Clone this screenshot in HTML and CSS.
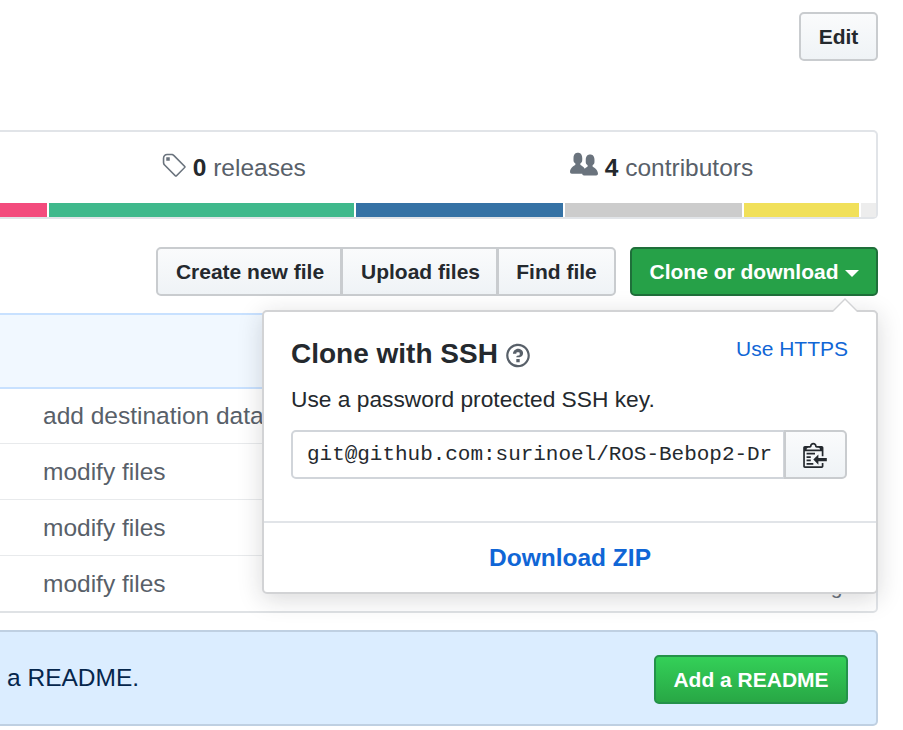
FILE: index.html
```html
<!DOCTYPE html>
<html lang="en">
<head>
<meta charset="utf-8">
<title>ROS-Bebop2-Drone</title>
<link rel="stylesheet" href="styles.css">
</head>
<body>
<div class="page">
  <div class="top-row"><button class="btn edit">Edit</button></div>

  <section class="summary">
    <div class="stats">
      <div class="stat stat-releases">
        <svg class="icon tag" viewBox="0 0 14 16"><path fill-rule="evenodd" d="M7.73 1.73C7.26 1.26 6.62 1 5.96 1H3.5C2.13 1 1 2.13 1 3.5v2.47c0 .66.27 1.3.73 1.77l6.06 6.06c.39.39 1.02.39 1.41 0l4.59-4.59a.996.996 0 000-1.41L7.73 1.73zM2.38 7.09c-.31-.3-.47-.7-.47-1.13V3.5c0-.88.72-1.59 1.59-1.59h2.47c.42 0 .83.16 1.13.47l6.14 6.13-4.73 4.73-6.13-6.15zM3.01 3h2v2H3V3h.01z"/></svg>
        <span><b>0</b> releases</span>
      </div>
      <div class="stat">
        <svg class="icon org" viewBox="0 0 16 16"><path fill-rule="evenodd" d="M16 12.999c0 .439-.45 1-1 1H7.995c-.539 0-.994-.447-.995-.999H1c-.54 0-1-.561-1-1 0-2.634 3-4 3-4s.229-.409 0-1c-.841-.621-1.058-.59-1-3 .058-2.419 1.367-3 2.5-3s2.442.58 2.5 3c.058 2.41-.159 2.379-1 3-.229.59 0 1 0 1s1.549.711 2.42 2.088C9.196 9.369 10 8.999 10 8.999s.229-.409 0-1c-.841-.62-1.058-.59-1-3 .058-2.419 1.367-3 2.5-3s2.437.581 2.495 3c.059 2.41-.158 2.38-1 3-.229.59 0 1 0 1s3.005 1.366 3.005 4z"/></svg>
        <span><b>4</b> contributors</span>
      </div>
    </div>
    <div class="lang-bar">
      <i class="lang pink" style="width:47px"></i>
      <i class="lang green" style="width:305px"></i>
      <i class="lang blue" style="width:207px"></i>
      <i class="lang grey" style="width:177px"></i>
      <i class="lang yellow" style="width:115px"></i>
      <i class="lang light" style="width:15px"></i>
    </div>
  </section>

  <div class="actions">
    <div class="btn-group">
      <button class="btn create">Create new file</button>
      <button class="btn upload">Upload files</button>
      <button class="btn find">Find file</button>
    </div>
    <button class="btn clone">Clone or download<span class="caret"></span></button>
  </div>

  <section class="files">
    <div class="commit-bar"></div>
    <div class="row row-first"><span>add destination data</span><span class="age">2 months ago</span></div>
    <div class="row"><span>modify files</span><span class="age">2 months ago</span></div>
    <div class="row"><span>modify files</span><span class="age">2 months ago</span></div>
    <div class="row row-last"><span>modify files</span><span class="age">2 months ago</span></div>
  </section>

  <section class="readme">
    <span>a README.</span>
    <button class="btn add">Add a README</button>
  </section>

  <aside class="popover">
    <div class="pop-main">
      <div class="pop-head">
        <h2>Clone with SSH <svg class="help" viewBox="0 0 14 16"><path fill-rule="evenodd" d="M6 10h2v2H6v-2zm4-3.5C10 8.64 8 9 8 9H6c0-.55.45-1 1-1h.5c.28 0 .5-.22.5-.5v-1c0-.28-.22-.5-.5-.5h-1c-.28 0-.5.22-.5.5V7H4c0-1.5 1.5-3 3-3s3 1 3 2.5zM7 2.3c3.14 0 5.7 2.56 5.7 5.7s-2.56 5.7-5.7 5.7A5.71 5.71 0 011.3 8c0-3.14 2.56-5.7 5.7-5.7zM7 1C3.14 1 0 4.14 0 8s3.14 7 7 7 7-3.14 7-7-3.14-7-7-7z"/></svg></h2>
        <a class="https" href="#">Use HTTPS</a>
      </div>
      <p class="pop-text">Use a password protected SSH key.</p>
      <div class="clone-field">
        <div class="url">git@github.com:surinoel/ROS-Bebop2-Dr</div>
        <button class="copy"><svg class="clippy" viewBox="0 0 14 16"><path fill-rule="evenodd" d="M2 13h4v1H2v-1zm5-6H2v1h5V7zm2 3V8l-3 3 3 3v-2h5v-2H9zM4.5 9H2v1h2.5V9zM2 12h2.5v-1H2v1zm9 1h1v2c-.02.28-.11.52-.3.7-.19.18-.42.28-.7.3H1c-.55 0-1-.45-1-1V4c0-.55.45-1 1-1h3c0-1.11.89-2 2-2 1.11 0 2 .89 2 2h3c.55 0 1 .45 1 1v5h-1V6H1v9h10v-2zM2 5h8c0-.55-.45-1-1-1H8c-.55 0-1-.45-1-1s-.45-1-1-1-1 .45-1 1-.45 1-1 1H3c-.55 0-1 .45-1 1z"/></svg></button>
      </div>
    </div>
    <a class="zip" href="#">Download ZIP</a>
  </aside>
</div>
</body>
</html>
```

FILE: styles.css
```css
* { box-sizing: border-box; }
html, body { margin: 0; padding: 0; background: #fff; }
body { font-family: "Liberation Sans", Arial, sans-serif; color: #24292e; }
.page { position: relative; width: 903px; height: 730px; overflow: hidden; padding: 12px 25px 0 0; }

.btn {
  display: block; height: 49px; padding: 0; font: bold 21px/1 "Liberation Sans", Arial, sans-serif;
  color: #24292e; border: 2px solid #c9cccf; border-radius: 5px;
  background: linear-gradient(#fafbfc, #eff3f6); white-space: nowrap;
}
.top-row { display: flex; justify-content: flex-end; }
.edit { width: 79px; }

.summary { margin-top: 69px; height: 89px; border: 2px solid #e1e4e8; border-left: 0; border-radius: 0 5px 5px 0; }
.stats { height: 71px; display: flex; justify-content: flex-end; }
.stat { width: 429px; display: flex; align-items: center; justify-content: center; gap: 7px; font-size: 24.5px; color: #586069; }
.stat-releases { margin-right: -1px; }
.stat b { color: #24292e; }
.icon { fill: #6a737d; display: block; }
.tag { width: 24.5px; height: 28px; margin-top: -4px; }
.org { width: 28px; height: 28px; margin-top: -5px; }
.lang-bar { display: flex; gap: 2px; height: 14px; }
.lang { display: block; height: 14px; }
.pink { background: #f34b7d; }
.green { background: #3fb98c; }
.blue { background: #3572a5; }
.grey { background: #ccc; }
.yellow { background: #f1e05a; }
.light { background: #ededed; }

.actions { margin-top: 28px; display: flex; justify-content: flex-end; gap: 14px; }
.btn-group { display: flex; }
.create { width: 186px; padding-left: 2px; border-radius: 5px 0 0 5px; }
.upload { width: 157px; padding-left: 2px; margin-left: -1px; border-radius: 0; }
.find { width: 119px; margin-left: -1px; border-radius: 0 5px 5px 0; }
.clone { width: 248px; color: #fff; background: #26a148; border-color: #1f6f3a; display: flex; align-items: center; justify-content: center; }
.caret { display: inline-block; margin-left: 6px; margin-top: 3px; border: 7px solid transparent; border-top-color: #fff; border-bottom: 0; }

.files { margin-top: 17px; height: 300px; border-right: 2px solid #e1e4e8; border-bottom: 2px solid #dfe2e5; border-radius: 0 0 5px 0; }
.commit-bar { height: 76px; background: #f1f8ff; border: 2px solid #c8e1ff; border-left: 0; }
.row { height: 56px; display: flex; justify-content: space-between; align-items: center; padding: 0 22px 0 43px; font-size: 24.5px; color: #586069; border-bottom: 1px solid #e8eaec; }
.row-first { height: 55px; }
.row-last { height: 55px; border-bottom: 0; }
.age { font-size: 21px; color: #6a737d; padding-top: 7px; }

.readme { margin-top: 17px; height: 96px; display: flex; align-items: center; justify-content: space-between; padding: 0 28px 0 7px; background: #dbedff; border: 2px solid #bfd0e2; border-left: 0; border-radius: 0 5px 5px 0; color: #05264c; font-size: 24.5px; }
.add { width: 194px; color: #fff; background: linear-gradient(#34d058, #28a745); border-color: #24924a; margin-top: 3px; }

.popover { position: absolute; left: 262px; top: 310px; width: 616px; height: 284px; background: #fff; border: 2px solid #d2d3d5; border-radius: 5px; box-shadow: 0 5px 24px rgba(27,31,35,.17); }
.popover::before { content: ""; position: absolute; right: 18px; top: -14px; border: 13px solid transparent; border-top: 0; border-bottom: 13px solid #d2d3d5; }
.popover::after { content: ""; position: absolute; right: 19px; top: -12px; border: 12px solid transparent; border-top: 0; border-bottom: 12px solid #fff; }
.pop-main { height: 211px; padding: 0 28px 0 27px; border-bottom: 2px solid #e1e4e8; }
.pop-head { display: flex; justify-content: space-between; height: 73px; }
.pop-head h2 { margin: 0; padding-top: 26px; font-size: 28px; line-height: 32px; font-weight: bold; color: #24292e; white-space: nowrap; }
.help { width: 24px; height: 27px; fill: #586069; vertical-align: -6px; }
.https { padding-top: 24px; font-size: 21px; line-height: 26px; color: #1066d6; text-decoration: none; }
.pop-text { margin: 0; font-size: 22.75px; line-height: 28px; color: #24292e; }
.clone-field { display: flex; margin-top: 17px; height: 49px; }
.url { width: 494px; padding: 0 0 0 14px; font: 21px/45px "Liberation Mono", monospace; letter-spacing: -.03px; color: #24292e; background: #fff; border: 2px solid #d1d5da; border-radius: 5px 0 0 5px; overflow: hidden; white-space: nowrap; }
.copy { width: 63px; padding: 0 2px 0 0; margin-left: -1px; display: flex; align-items: center; justify-content: center; background: linear-gradient(#fafbfc, #eff3f6); border: 2px solid #c9cccf; border-radius: 0 5px 5px 0; }
.clippy { width: 24px; height: 27px; fill: #24292e; }
.zip { display: block; text-align: center; font-size: 24.5px; font-weight: bold; line-height: 28px; padding-top: 21px; color: #1066d6; text-decoration: none; }
```
